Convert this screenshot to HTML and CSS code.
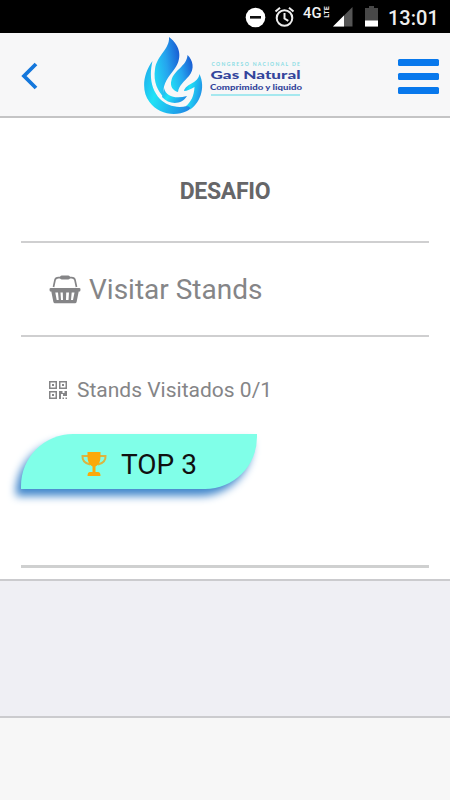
FILE: index.html
```html
<!DOCTYPE html>
<html lang="es">
<head>
<meta charset="utf-8">
<meta name="viewport" content="width=device-width">
<title>Desafio</title>
<link rel="stylesheet" href="styles.css">
</head>
<body>
<div class="status">
  <svg class="status-icons" width="140" height="33" viewBox="242 0 140 33">
    <circle cx="255.500" cy="17.500" r="9.800" fill="#fff"/>
    <rect x="250" y="16" width="11" height="2.600" fill="#111"/>
    <g fill="none" stroke="#eee" stroke-width="2">
      <circle cx="284.500" cy="18" r="7.800"/>
      <path d="M284.500 13v5.500l3.800 2.300M275.500 11.500l4.500-3.700M293.500 11.500l-4.500-3.700"/>
    </g>
    <text class="net" x="303" y="17.500" textLength="18.500" lengthAdjust="spacingAndGlyphs">4G</text>
    <text class="lte" transform="translate(328.500 17.800) rotate(-90)" textLength="11.500" lengthAdjust="spacingAndGlyphs">LTE</text>
    <path d="M333 26.500L352.500 7v19.500z" fill="#555"/>
    <path d="M333 26.500L344 15.500v11z" fill="#fff"/>
    <path d="M365 8h4V6h5v2h4v18.500h-13z" fill="#484848"/>
    <path d="M365 20.500h13v6h-13z" fill="#fff"/>
  </svg>
  <span class="clock">13:01</span>
</div>
<header class="nav">
  <svg class="back" width="18" height="30" viewBox="0 0 18 30"><path d="M16 3L4 15l12 12" fill="none" stroke="#1477dc" stroke-width="3.800"/></svg>
  <svg class="logo" width="166" height="82" viewBox="142 35 166 82">
    <defs>
      <linearGradient id="deep" x1="0" y1=".7" x2="1" y2=".3"><stop offset="0" stop-color="#22d8f5"/><stop offset=".5" stop-color="#25a4ee"/><stop offset="1" stop-color="#1a5fd4"/></linearGradient>
      <linearGradient id="cyan" x1="0" y1=".3" x2="1" y2=".7"><stop offset="0" stop-color="#1fb4ee"/><stop offset=".3" stop-color="#20e2f6"/><stop offset=".65" stop-color="#20b4ee"/><stop offset="1" stop-color="#1f86e4"/></linearGradient>
    </defs>
    <path d="M152.500 61C143 74 141 91 149.500 102C158 114 175 117 187 111C190 109.500 192 107 194 103C182 110 168 107 160 99C151 89 149 76 152.500 61Z" fill="url(#cyan)"/>
    <path d="M169 37C170 49 157 55 155 69C153 82 158 92 164 97C162 86 166 80 173 71C183 59 181 46 169 37Z" fill="url(#deep)"/>
    <path d="M187.500 55C187 66 174 70 171.500 80C169.500 86 173 91 178 92C179 85 184 82 189 76C195 69 193 60 187.500 55Z" fill="url(#deep)"/>
    <path d="M199.500 74C198 84 186 83 184 91C187 91 191 89 194.500 87C194 96 191 102 186 106C190 106 192 109 188 111C200 104 206 88 199.500 74Z" fill="url(#cyan)"/>
    <path d="M164 88C166 97 176 99 187 96C182 105 169 105 162 97Q163 94 164 88Z" fill="url(#cyan)"/>
    <text class="logo-top" x="211.500" y="66.300" textLength="88.500" lengthAdjust="spacing">CONGRESO NACIONAL DE</text>
    <text class="logo-main" x="210.500" y="79.300" textLength="90" lengthAdjust="spacingAndGlyphs">Gas Natural</text>
    <text class="logo-sub" x="210" y="90" textLength="92" lengthAdjust="spacingAndGlyphs">Comprimido y liquido</text>
    <path d="M211 95h89" stroke="#8be3ec" stroke-width="1.500"/>
  </svg>
  <div class="menu"><i></i><i></i><i></i></div>
</header>
<main class="card">
  <h1 class="title">DESAFIO</h1>
  <section class="task">
    <svg width="32" height="29" viewBox="0 0 32 29">
      <path d="M4.500 12L6 5Q6.500 2.700 9.500 2.700H22.500Q25.500 2.700 26 5L27.500 12" fill="none" stroke="#858587" stroke-width="1.700"/>
      <rect x="11" y=".5" width="10" height="4" rx="1.700" fill="#858587"/>
      <path fill="#858587" fill-rule="evenodd" d="M1.500 13H30.500Q31.700 13 31.500 15L31 16.500H29.700L27.600 27Q27.300 28.300 26 28.300H6Q4.700 28.300 4.400 27L2.300 16.500H1L.5 15Q.3 13 1.500 13ZM6.300 17.500L7.700 25H9.700L9 17.500ZM11.500 17.500L12 25H14L13.800 17.500ZM17.200 17.500L17 25H19.500L20 17.500ZM22.700 17.500L22 25H24L25.500 17.500Z"/>
    </svg>
    <span>Visitar Stands</span>
  </section>
  <div class="progress">
    <svg width="18" height="18" viewBox="0 0 18 18" fill="#858587">
      <path fill-rule="evenodd" d="M0 0h8v8H0zM1.500 1.500v5h5v-5zM10 0h8v8h-8zM11.500 1.500v5h5v-5zM0 10h8v8H0zM1.500 11.500v5h5v-5z"/>
      <path d="M3 3h2v2H3zM13 3h2v2h-2zM3 13h2v2H3zM10 10h3.500v2h2v-2H18v5h-4v-2h-2v5h-2zM13.500 16.500h1.500V18h-1.500zM16.500 16.500H18V18h-1.500z"/>
    </svg>
    <span>Stands Visitados 0/1</span>
  </div>
  <div class="top">
    <svg width="28" height="26" viewBox="0 0 28 26">
      <path d="M8 5H2.500Q2 11.500 10 13.500M20 5h5.500Q26 11.500 18 13.500" fill="none" stroke="#d9b642" stroke-width="2"/>
      <path d="M7.500 1h13v5Q20.500 13 15.500 15.500V21h2.500Q20.500 21 20.500 25H7.500Q7.500 21 10 21h2.500V15.500Q7.500 13 7.500 6z" fill="#fba90b"/>
    </svg>
    <span>TOP 3</span>
  </div>
</main>
<div class="rest"></div>
<footer class="foot"></footer>
</body>
</html>
```
FILE: styles.css
```css
* { box-sizing: border-box; }
body {
  margin: 0;
  height: 800px;
  display: flex;
  flex-direction: column;
  overflow: hidden;
  background: #fff;
  color: #858587;
  font-family: Roboto, sans-serif;
}
svg { display: block; flex: none; }
span { white-space: nowrap; }
.status {
  height: 33px;
  flex: none;
  display: flex;
  align-items: center;
  padding-left: 242px;
  background: #000;
}
.clock {
  margin: 2px 0 0 6px;
  color: #eee;
  font-size: 20px;
  font-weight: 500;
  line-height: 24px;
}
.net { fill: #f2f2f2; font: 500 15px Roboto, sans-serif; }
.lte { fill: #f2f2f2; font: 700 8px Roboto, sans-serif; }
.nav {
  height: 85px;
  flex: none;
  display: flex;
  align-items: flex-start;
  padding-top: 2px;
  background: #f7f7f8;
  border-bottom: 2px solid #c4c4c5;
}
.back { margin: 26px 0 0 20px; }
.logo { margin-left: 104px; }
.logo-top { fill: #88dce4; font: 700 5px Lato, sans-serif; }
.logo-main { fill: #34459c; font: 900 12px Lato, sans-serif; }
.logo-sub { fill: #34459c; font: 900 8px Lato, sans-serif; }
.menu {
  width: 41px;
  margin: 24px 0 0 90px;
  display: flex;
  flex-direction: column;
  gap: 7px;
}
.menu i { height: 7px; border-radius: 1.5px; background: #0878ec; }
.card {
  height: 461px;
  flex: none;
  padding: 0 21px;
}
.title {
  margin: 0;
  height: 123px;
  padding-top: 60px;
  text-align: center;
  color: #666668;
  font-size: 23px;
  font-weight: 700;
  letter-spacing: -0.3px;
  line-height: 28px;
}
.task {
  height: 96px;
  display: flex;
  align-items: center;
  gap: 8px;
  padding: 1px 0 0 28px;
  border-top: 2px solid #cfcfd0;
  border-bottom: 2px solid #cfcfd0;
  font-size: 28px;
}
.progress {
  height: 97px;
  display: flex;
  align-items: center;
  gap: 10px;
  padding: 8px 0 0 28px;
  font-size: 21px;
}
.top {
  width: 236px;
  height: 55px;
  display: flex;
  align-items: center;
  gap: 13px;
  padding: 5px 0 0 59px;
  border-radius: 52px 0 52px 0;
  background: #80ffe8;
  box-shadow: -5px 7px 8px #4388cc;
  color: #101010;
  font-size: 28px;
}
.card::after {
  content: "";
  display: block;
  height: 3px;
  margin-top: 76px;
  background: #cfd0d0;
}
.rest {
  height: 139px;
  flex: none;
  border-top: 2px solid #cbcbce;
  border-bottom: 2px solid #cbcbce;
  background: #efeff4;
}
.foot { flex: 1; background: #f7f7f7; }
```
